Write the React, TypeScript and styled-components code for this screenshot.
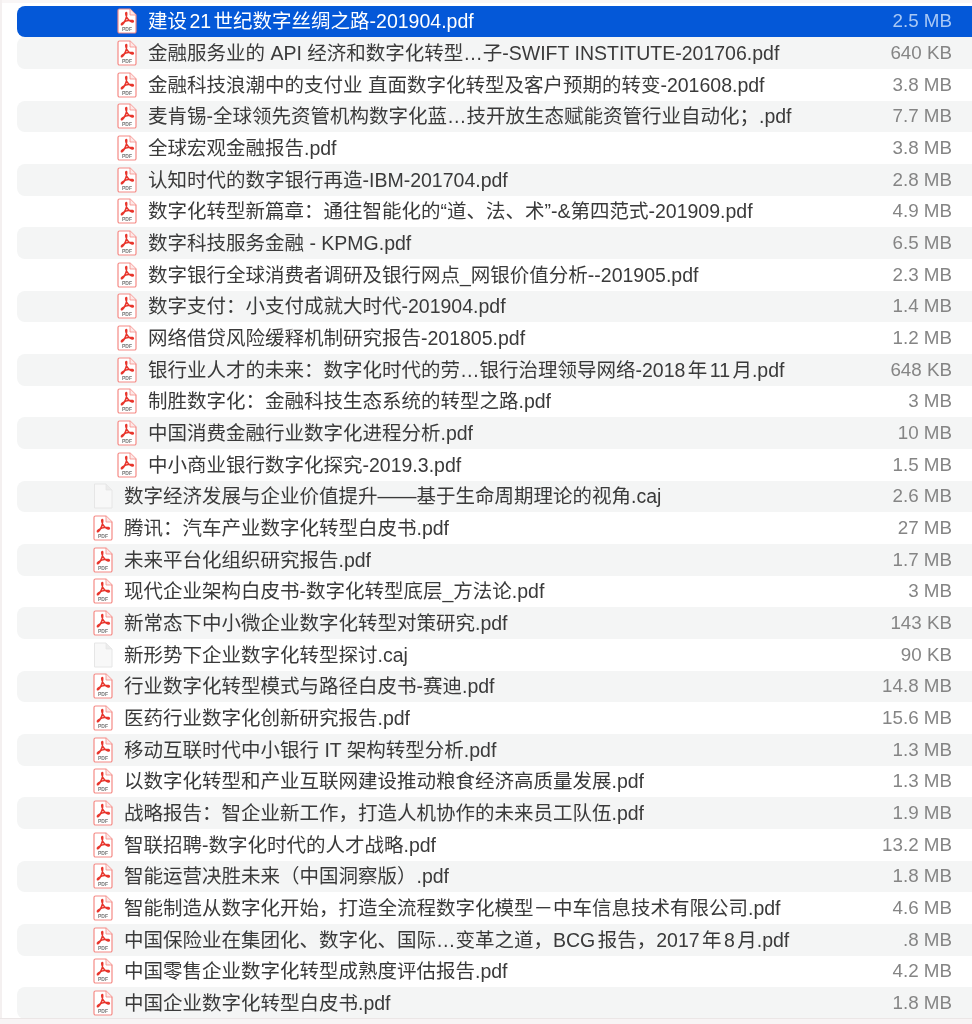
import React from 'react';
import styled, { createGlobalStyle } from 'styled-components';

const GlobalStyle = createGlobalStyle`
  html, body {
    margin: 0;
    padding: 0;
    background: #fff;
  }
`;

const Page = styled.div`
  width: 972px;
  height: 1024px;
  overflow: hidden;
  box-sizing: border-box;
  padding: 5.5px 0 0 17px;
  background: #fff;
  font-family: 'Liberation Sans', 'Noto Sans CJK SC', sans-serif;
  position: relative;
`;

const TopEdge = styled.div`
  position: absolute;
  left: 0;
  right: 0;
  top: 0;
  height: 3px;
  background: #f9f6f6;
`;

const BottomEdge = styled.div`
  position: absolute;
  left: 0;
  right: 0;
  bottom: 0;
  height: 5px;
  background: #f8f4f5;
  border-top: 1px solid #ebe6e6;
`;

const SideEdge = styled.div`
  position: absolute;
  left: 0;
  top: 0;
  bottom: 0;
  width: 2px;
  background: #f4f0f0;
`;

const List = styled.div`
  display: flex;
  flex-direction: column;
  filter: blur(0.35px);
`;

const Row = styled.div<{ $stripe: boolean; $selected: boolean }>`
  height: 31.68px;
  display: flex;
  align-items: center;
  padding-right: 20px;
  border-radius: 8px 0 0 8px;
  background: ${p => (p.$selected ? '#0458d8' : p.$stripe ? '#f4f5f5' : 'transparent')};
`;

const Name = styled.div<{ $depth: number; $selected: boolean }>`
  flex: 1;
  display: flex;
  align-items: center;
  gap: 11px;
  padding-left: ${p => (p.$depth ? 100 : 76)}px;
  font-size: 19.5px;
  line-height: 24px;
  white-space: nowrap;
  text-autospace: normal;
  color: ${p => (p.$selected ? '#fff' : '#3a3a3a')};
`;

const Size = styled.div<{ $selected: boolean }>`
  font-size: 18.8px;
  line-height: 24px;
  white-space: nowrap;
  color: ${p => (p.$selected ? '#a9c8f5' : '#858585')};
`;

const IconSlot = styled.svg`
  flex: none;
  width: 20px;
  height: 26px;
`;

const PdfIcon = () => (
  <IconSlot viewBox="0 0 20 26">
    <path
      d="M2.500 1h10.500l6 6v16.500a1.500 1.500 0 0 1-1.500 1.500h-15A1.500 1.500 0 0 1 1 23.500v-21A1.500 1.500 0 0 1 2.500 1z"
      fill="#fff"
      stroke="#f58a85"
      strokeWidth="1.2"
    />
    <path d="M13 1v6h6" fill="#fde8e7" stroke="#f58a85" strokeWidth="0.8" />
    <path
      d="M9.300 4.500c-.9 0-.8 2.400.6 5 1.200 2.300 3.300 4 5.200 4.400 1.500.3 1.700-1 .4-1.300-2.800-.6-7.600.3-10.300 2.500-1.500 1.300-.9 2.400.5 1 2-2 3.800-6.500 4-9.700.1-1.300 0-1.900-.4-1.900z"
      fill="none"
      stroke="#e8352c"
      strokeWidth="1.500"
    />
    <text x="10" y="22.800" textAnchor="middle" fontSize="5" fontWeight="700" fill="#777" fontFamily="Liberation Sans, sans-serif">
      PDF
    </text>
  </IconSlot>
);

const CajIcon = () => (
  <IconSlot viewBox="0 0 20 26">
    <path
      d="M1.500 1h11.500l6 6v18h-17.500z"
      fill="#f8f8f8"
      stroke="#e6e6e6"
      strokeWidth="1"
    />
    <path d="M13 1v6h6" fill="#ececec" stroke="#e6e6e6" strokeWidth="0.8" />
  </IconSlot>
);

type FileRow = { name: string; size: string; depth: number };

const nested: [string, string][] = [
  ['建设21世纪数字丝绸之路-201904.pdf', '2.5 MB'],
  ['金融服务业的 API 经济和数字化转型…子-SWIFT INSTITUTE-201706.pdf', '640 KB'],
  ['金融科技浪潮中的支付业 直面数字化转型及客户预期的转变-201608.pdf', '3.8 MB'],
  ['麦肯锡-全球领先资管机构数字化蓝…技开放生态赋能资管行业自动化；.pdf', '7.7 MB'],
  ['全球宏观金融报告.pdf', '3.8 MB'],
  ['认知时代的数字银行再造-IBM-201704.pdf', '2.8 MB'],
  ['数字化转型新篇章：通往智能化的“道、法、术”-&第四范式-201909.pdf', '4.9 MB'],
  ['数字科技服务金融 - KPMG.pdf', '6.5 MB'],
  ['数字银行全球消费者调研及银行网点_网银价值分析--201905.pdf', '2.3 MB'],
  ['数字支付：小支付成就大时代-201904.pdf', '1.4 MB'],
  ['网络借贷风险缓释机制研究报告-201805.pdf', '1.2 MB'],
  ['银行业人才的未来：数字化时代的劳…银行治理领导网络-2018年11月.pdf', '648 KB'],
  ['制胜数字化：金融科技生态系统的转型之路.pdf', '3 MB'],
  ['中国消费金融行业数字化进程分析.pdf', '10 MB'],
  ['中小商业银行数字化探究-2019.3.pdf', '1.5 MB'],
];

const topLevel: [string, string][] = [
  ['数字经济发展与企业价值提升——基于生命周期理论的视角.caj', '2.6 MB'],
  ['腾讯：汽车产业数字化转型白皮书.pdf', '27 MB'],
  ['未来平台化组织研究报告.pdf', '1.7 MB'],
  ['现代企业架构白皮书-数字化转型底层_方法论.pdf', '3 MB'],
  ['新常态下中小微企业数字化转型对策研究.pdf', '143 KB'],
  ['新形势下企业数字化转型探讨.caj', '90 KB'],
  ['行业数字化转型模式与路径白皮书-赛迪.pdf', '14.8 MB'],
  ['医药行业数字化创新研究报告.pdf', '15.6 MB'],
  ['移动互联时代中小银行 IT 架构转型分析.pdf', '1.3 MB'],
  ['以数字化转型和产业互联网建设推动粮食经济高质量发展.pdf', '1.3 MB'],
  ['战略报告：智企业新工作，打造人机协作的未来员工队伍.pdf', '1.9 MB'],
  ['智联招聘-数字化时代的人才战略.pdf', '13.2 MB'],
  ['智能运营决胜未来（中国洞察版）.pdf', '1.8 MB'],
  ['智能制造从数字化开始，打造全流程数字化模型－中车信息技术有限公司.pdf', '4.6 MB'],
  ['中国保险业在集团化、数字化、国际…变革之道，BCG报告，2017年8月.pdf', '.8 MB'],
  ['中国零售企业数字化转型成熟度评估报告.pdf', '4.2 MB'],
  ['中国企业数字化转型白皮书.pdf', '1.8 MB'],
];

const files: FileRow[] = [
  ...nested.map(([name, size]) => ({ name, size, depth: 1 })),
  ...topLevel.map(([name, size]) => ({ name, size, depth: 0 })),
];

export default function App() {
  return (
    <Page>
      <GlobalStyle />
      <TopEdge />
      <SideEdge />
      <List>
        {files.map((f, i) => (
          <Row key={f.name} $stripe={i % 2 === 1} $selected={i === 0}>
            <Name $depth={f.depth} $selected={i === 0}>
              {f.name.endsWith('.caj') ? <CajIcon /> : <PdfIcon />}
              <span>{f.name}</span>
            </Name>
            <Size $selected={i === 0}>{f.size}</Size>
          </Row>
        ))}
      </List>
      <BottomEdge />
    </Page>
  );
}
